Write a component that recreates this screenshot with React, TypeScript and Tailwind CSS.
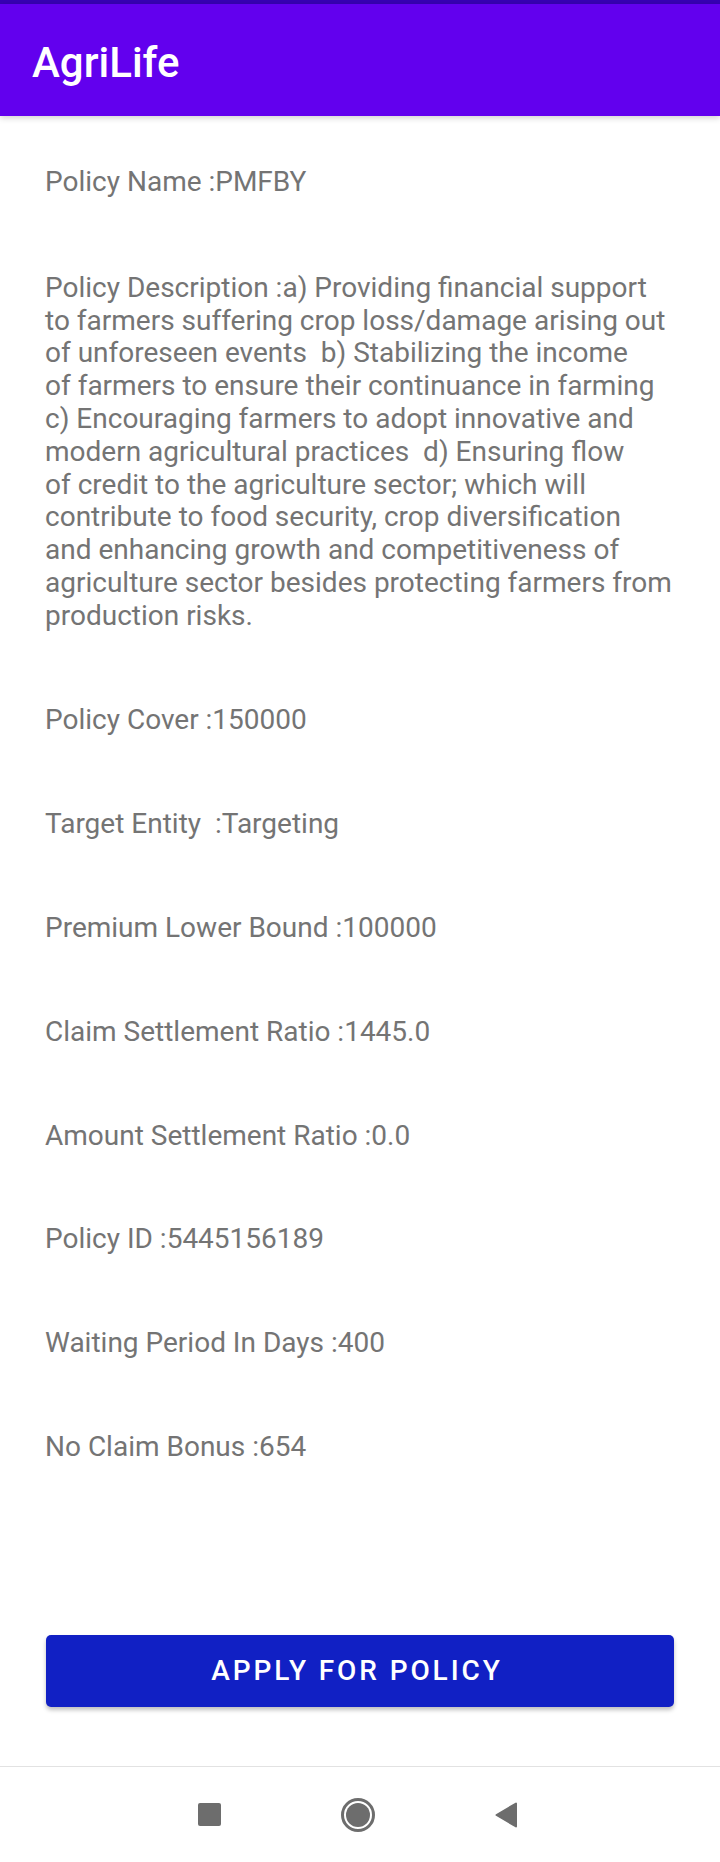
import React from "react";

const descLines = [
  "Policy Description :a) Providing financial support",
  "to farmers suffering crop loss/damage arising out",
  "of unforeseen events  b) Stabilizing the income",
  "of farmers to ensure their continuance in farming",
  "c) Encouraging farmers to adopt innovative and",
  "modern agricultural practices  d) Ensuring flow",
  "of credit to the agriculture sector; which will",
  "contribute to food security, crop diversification",
  "and enhancing growth and competitiveness of",
  "agriculture sector besides protecting farmers from",
  "production risks.",
];

const rows = [
  "Policy Cover :150000",
  "Target Entity  :Targeting",
  "Premium Lower Bound :100000",
  "Claim Settlement Ratio :1445.0",
  "Amount Settlement Ratio :0.0",
  "Policy ID :5445156189",
  "Waiting Period In Days :400",
  "No Claim Bonus :654",
];

export default function App() {
  return (
    <div
      className="w-[720px] h-[1862px] bg-white flex flex-col overflow-hidden"
      style={{ fontFamily: "Roboto, 'Noto Sans', sans-serif" }}
    >
      {/* status strip */}
      <div className="h-[4px] bg-[#3700b3]" />
      {/* app bar */}
      <div className="relative z-10 h-[112px] pt-[4px] pl-[32px] flex items-center bg-[#6200ee] shadow-[0_2px_6px_rgba(0,0,0,0.18)]">
        <span className="text-white text-[42px] font-medium leading-normal">
          AgriLife
        </span>
      </div>

      {/* content */}
      <div className="px-[45px] pt-[50px] text-[#747474] text-[28px] leading-[32.8px]">
        <div className="whitespace-pre">Policy Name :PMFBY</div>
        <div className="mt-[73px]">
          {descLines.map((l, i) => (
            <div key={i} className="whitespace-pre">
              {l}
            </div>
          ))}
        </div>
        <div className="mt-[71px] flex flex-col gap-[71.2px]">
          {rows.map((r, i) => (
            <div key={i} className="whitespace-pre">
              {r}
            </div>
          ))}
        </div>
      </div>

      {/* button */}
      <div className="px-[46px] mt-[171px]">
        <button className="w-full h-[72px] pr-[6px] rounded-[5px] bg-[#1120c4] text-white text-[28px] font-medium tracking-[2.9px] shadow-[0_3px_4px_rgba(0,0,0,0.25)]">
          APPLY FOR POLICY
        </button>
      </div>

      <div className="flex-1" />

      {/* nav bar */}
      <div className="h-[96px] border-t border-[#e2e2e2] flex items-center pl-[198px] gap-[120px] bg-white">
        <div className="w-[23px] h-[23px] rounded-[2px] bg-[#6d6d6d]" />
        <svg width="34" height="34" viewBox="0 0 34 34">
          <circle cx="17" cy="17" r="15.5" fill="none" stroke="#6d6d6d" strokeWidth="3" />
          <circle cx="17" cy="17" r="12" fill="#6d6d6d" />
        </svg>
        <svg width="22" height="26" viewBox="0 0 22 26">
          <polygon
            points="21,1.5 21,24.5 1.5,13"
            fill="#6d6d6d"
            stroke="#6d6d6d"
            strokeWidth="2"
            strokeLinejoin="round"
          />
        </svg>
      </div>
    </div>
  );
}
